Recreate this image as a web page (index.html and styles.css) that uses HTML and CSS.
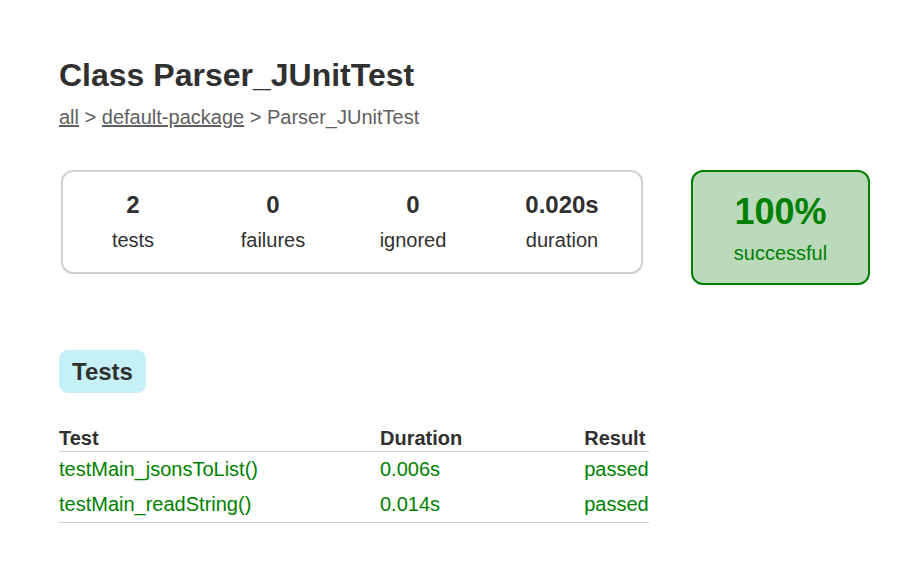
FILE: index.html
```html
<!DOCTYPE html>
<html>
<head>
<meta charset="utf-8">
<title>Test results - Class Parser_JUnitTest</title>
<link rel="stylesheet" href="styles.css">
</head>
<body>
<div class="content">
  <h1 class="title">Class Parser_JUnitTest</h1>
  <div class="breadcrumbs">
    <a href="#">all</a> &gt; <a href="#">default-package</a> &gt; Parser_JUnitTest
  </div>

  <div class="summary">
    <div class="summary-group">
      <div class="info-box">
        <div class="counter">2</div>
        <p class="label">tests</p>
      </div>
      <div class="info-box">
        <div class="counter">0</div>
        <p class="label">failures</p>
      </div>
      <div class="info-box">
        <div class="counter">0</div>
        <p class="label">ignored</p>
      </div>
      <div class="info-box duration">
        <div class="counter">0.020s</div>
        <p class="label">duration</p>
      </div>
    </div>
    <div class="success-rate">
      <div class="percent">100%</div>
      <p class="label">successful</p>
    </div>
  </div>

  <div class="tab-links">
    <div class="tab-link selected"><h2 class="tab-title">Tests</h2></div>
  </div>

  <table class="tests">
    <thead>
      <tr>
        <th>Test</th>
        <th>Duration</th>
        <th>Result</th>
      </tr>
    </thead>
    <tbody>
      <tr class="success">
        <td>testMain_jsonsToList()</td>
        <td>0.006s</td>
        <td>passed</td>
      </tr>
      <tr class="success">
        <td>testMain_readString()</td>
        <td>0.014s</td>
        <td>passed</td>
      </tr>
    </tbody>
  </table>
</div>
</body>
</html>
```

FILE: styles.css
```css
html, body {
  margin: 0;
  padding: 0;
  background: #ffffff;
}

body {
  font-family: "Liberation Sans", Arial, sans-serif;
  font-size: 20px;
  color: #303030;
}

.content {
  padding: 36px 59px 30px;
}

.title {
  font-size: 32px;
  font-weight: bold;
  line-height: 37px;
  margin: 21px 0 12px;
  white-space: nowrap;
}

.breadcrumbs {
  color: #606060;
  line-height: 23px;
}

.breadcrumbs a {
  color: #606060;
  text-decoration: underline;
}

.summary {
  display: flex;
  align-items: flex-start;
  margin-top: 41px;
  gap: 48px;
}

.summary-group {
  display: flex;
  flex-shrink: 0;
  margin-left: 2px;
  border: 2px solid #d0d0d0;
  border-radius: 12px;
}

.info-box {
  width: 140px;
  padding: 19px 0 20px;
  text-align: center;
}

.info-box.duration {
  width: 158px;
}

.counter {
  font-size: 24px;
  font-weight: bold;
  line-height: 28px;
  margin-bottom: 10px;
}

.label {
  margin: 0;
  line-height: 23px;
}

.success-rate {
  flex-shrink: 0;
  width: 175px;
  padding: 19px 0 18px;
  text-align: center;
  border: 2px solid #008000;
  border-radius: 12px;
  background: #bbd9bb;
  color: #008000;
}

.percent {
  font-size: 36px;
  font-weight: bold;
  line-height: 41px;
  margin-bottom: 10px;
}

.tab-links {
  display: flex;
  margin-top: 65px;
}

.tab-link {
  padding: 7px 12px 6px;
  border: 1px solid #d4d4d4;
  border-radius: 9px;
  background: #f0f0f0;
}

.tab-link.selected {
  background: #c5f0f5;
  border-color: #c5f0f5;
}

.tab-title {
  margin: 0;
  font-size: 24px;
  font-weight: bold;
  line-height: 28px;
}

.tests {
  margin-top: 33px;
  border-collapse: collapse;
  border-bottom: 1px solid #d0d0d0;
}

.tests th {
  text-align: left;
  white-space: nowrap;
  font-weight: bold;
  line-height: 23px;
  padding: 1px 0 1px 122px;
  border-bottom: 1px solid #d0d0d0;
}

.tests td {
  white-space: nowrap;
  line-height: 23px;
  padding: 6px 0 6px 122px;
}

.tests th:first-child,
.tests td:first-child {
  padding-left: 0;
}

.tests tr.success td {
  color: #008000;
}
```
